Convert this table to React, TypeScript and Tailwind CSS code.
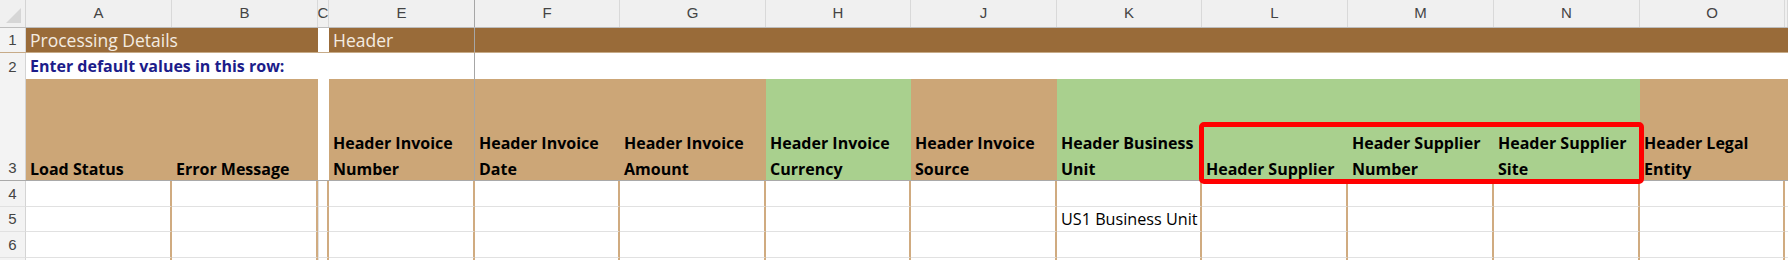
import React from "react"

const GRID =
  "grid grid-cols-[26px_146px_146px_11px_146px_145px_146px_145px_146px_145px_146px_146px_146px_145px_1fr]"

const letters = ["A", "B", "C", "E", "F", "G", "H", "J", "K", "L", "M", "N", "O", ""]

type HeadCell = { lines: string[]; tone: "tan" | "green" | "blank"; freeze?: boolean }

const headers: HeadCell[] = [
  { lines: ["Load Status"], tone: "tan" },
  { lines: ["Error Message"], tone: "tan" },
  { lines: [], tone: "blank" },
  { lines: ["Header Invoice", "Number"], tone: "tan", freeze: true },
  { lines: ["Header Invoice", "Date"], tone: "tan" },
  { lines: ["Header Invoice", "Amount"], tone: "tan" },
  { lines: ["Header Invoice", "Currency"], tone: "green" },
  { lines: ["Header Invoice", "Source"], tone: "tan" },
  { lines: ["Header Business", "Unit"], tone: "green" },
  { lines: ["Header Supplier"], tone: "green" },
  { lines: ["Header Supplier", "Number"], tone: "green" },
  { lines: ["Header Supplier", "Site"], tone: "green" },
  { lines: ["Header Legal", "Entity"], tone: "tan" },
  { lines: [], tone: "tan" },
]

function RowNum({ n, className = "" }: { n: string; className?: string }) {
  return (
    <div
      className={`flex items-end justify-center pb-[1px] bg-[#f3f3f3] border-r border-[#d4d4d4] text-[15px] text-[#444] font-['Liberation_Sans',sans-serif] ${className}`}
    >
      {n}
    </div>
  )
}

function DataRow({ n, height, values = {} }: { n: string; height: string; values?: Record<number, string> }) {
  return (
    <div className={`${GRID} ${height}`}>
      <RowNum n={n} className="border-b border-b-[#e1e1e1]" />
      {letters.map((_, i) => (
        <div
          key={i}
          className={`flex items-end pl-1 bg-white border-b border-b-[#e1e1e1] text-[16.2px] leading-[24px] text-black whitespace-nowrap ${
            i === 2 ? "border-l border-l-[#e1e1e1] border-r-2 border-r-[#d0ab80]" : "border-r-2 border-r-[#d0ab80]"
          }`}
        >
          {values[i]}
        </div>
      ))}
    </div>
  )
}

export default function App() {
  return (
    <div className="relative w-[1788px] h-[260px] overflow-hidden bg-white font-['Open_Sans',sans-serif]">
      {/* column letters */}
      <div className={`${GRID} h-[28px] bg-[#f0f0f0] border-b border-[#bdbdbd]`}>
        <div className="flex items-end justify-end pr-[4px] pb-[4px] border-r border-[#d4d4d4]">
          <svg width="15" height="15" viewBox="0 0 15 15">
            <polygon points="15,0 15,15 0,15" fill="#d6d6d6" />
          </svg>
        </div>
        {letters.map((l, i) => (
          <div
            key={i}
            className={`flex items-center justify-center text-[15px] text-[#444] font-['Liberation_Sans',sans-serif] border-r ${
              i === 3 ? "border-[#a6a6a6]" : "border-[#d9d9d9]"
            }`}
          >
            {l}
          </div>
        ))}
      </div>

      {/* row 1 */}
      <div className={`${GRID} h-[25px] border-b border-[#c7ab88]`}>
        <RowNum n="1" />
        <div className="col-span-2 flex items-end pl-1 bg-[#996b39] text-[17.5px] leading-[24px] text-[#f4ece1]">
          Processing Details
        </div>
        <div className="bg-white" />
        <div className="flex items-end pl-1 bg-[#996b39] border-r border-[#a6a6a6] text-[17.5px] leading-[24px] text-[#f4ece1]">
          Header
        </div>
        <div className="col-span-10 bg-[#996b39]" />
      </div>

      {/* row 2 */}
      <div className={`${GRID} h-[26px]`}>
        <RowNum n="2" />
        <div className="col-span-4 flex items-end pl-1 bg-white border-r border-[#a6a6a6] text-[16px] leading-[25px] font-bold text-[#1c1c8a] whitespace-nowrap">
          Enter default values in this row:
        </div>
        <div className="col-span-10 bg-white" />
      </div>

      {/* row 3 */}
      <div className={`${GRID} h-[102px] border-b border-[#a9a9a9]`}>
        <RowNum n="3" />
        {headers.map((h, i) => (
          <div
            key={i}
            className={`flex flex-col justify-end pl-1 text-[16px] leading-[26px] font-bold text-black whitespace-nowrap ${
              h.tone === "tan" ? "bg-[#cca677]" : h.tone === "green" ? "bg-[#a9d08e]" : "bg-white"
            } ${h.freeze ? "border-r border-[#a6a6a6]" : ""}`}
          >
            <div className="translate-y-[2px]">
              {h.lines.map((line) => (
                <div key={line}>{line}</div>
              ))}
            </div>
          </div>
        ))}
      </div>

      <DataRow n="4" height="h-[26px]" />
      <DataRow n="5" height="h-[25px]" values={{ 8: "US1 Business Unit" }} />
      <DataRow n="6" height="h-[26px]" />
      <DataRow n="" height="h-[26px]" />

      {/* highlight box around supplier columns */}
      <div className="absolute left-[1199px] top-[122px] w-[445px] h-[62px] border-[5px] border-[#ff0000] rounded-[5px] pointer-events-none" />
    </div>
  )
}
